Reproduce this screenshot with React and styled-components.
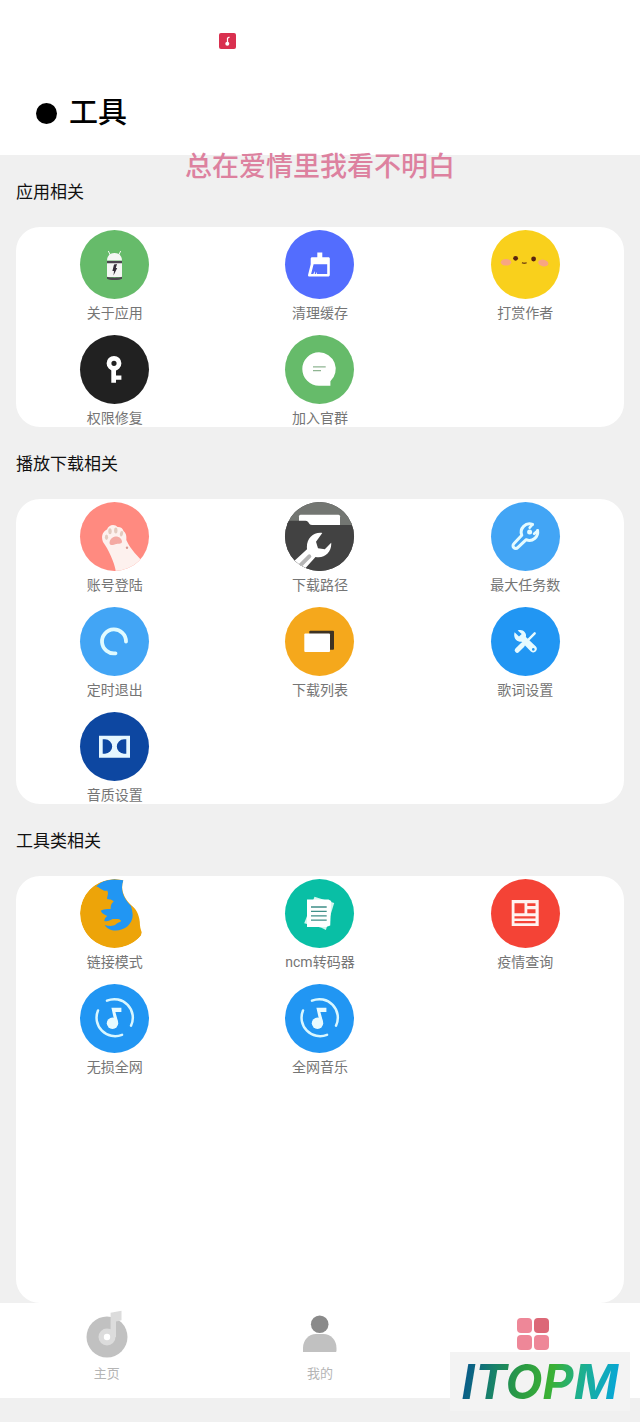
import React from 'react';
import styled, { createGlobalStyle } from 'styled-components'

const GlobalStyle = createGlobalStyle`
* {
    box-sizing: border-box;
}
body {
    margin: 0;
    background: #f0f0f0;
    font-family: Roboto, "Noto Sans CJK SC", sans-serif;
}
button {
    border: 0;
    padding: 0;
    background: none;
    font: inherit;
    cursor: pointer;
}
`

const Page = styled.div`
    position: relative;
    display: flex;
    flex-direction: column;
    min-height: 100vh;
    padding-bottom: 24px;
`

const Header = styled.header`
    background: white;
    padding-bottom: 11px;
`

const StatusBar = styled.div`
    display: flex;
    align-items: center;
    height: 82px;
    padding-left: 34%;
`

const TitleRow = styled.div`
    display: flex;
    align-items: center;
    gap: 12px;
    height: 62px;
    padding-left: 36px;
`

const Dot = styled.span`
    width: 21px;
    height: 21px;
    border-radius: 50%;
    background: black;
`

const Title = styled.h1`
    margin: 0;
    font-size: 29px;
    font-weight: 500;
    line-height: 40px;
    color: black;
`

/* floating desktop lyric, sits over the header edge */
const Lyric = styled.p`
    position: absolute;
    top: 147px;
    left: 0;
    right: 0;
    margin: 0;
    text-align: center;
    font-size: 27px;
    font-weight: 500;
    line-height: 40px;
    color: #dd819f;
    pointer-events: none;
`

const Main = styled.main`
    flex: 1;
    display: flex;
    flex-direction: column;
    padding: 0 16px;
`

const Section = styled.section`
    display: flex;
    flex-direction: column;
    flex-grow: ${(props) => (props.$fill ? 1 : 0)};
`

const SectionTitle = styled.h2`
    margin: 0;
    padding-top: 2px;
    font-size: 17px;
    font-weight: 400;
    line-height: 70px;
    color: #111;
`

const Card = styled.ul`
    flex-grow: 1;
    display: grid;
    grid-template-columns: repeat(3, 1fr);
    align-content: start;
    gap: 13px 8px;
    margin: 0;
    padding: 3px 0 0;
    list-style: none;
    background: white;
    border-radius: 24px;
`

const Tool = styled.li`
    display: flex;
    justify-content: center;
`

const ToolButton = styled.button`
    display: flex;
    flex-direction: column;
    align-items: center;
    gap: 6px;
    font-size: 14px;
    line-height: 17px;
    color: #757575;
`

const Round = styled.span`
    display: block;
    width: 69px;
    height: 69px;
    border-radius: 50%;
    overflow: hidden;
    background: ${(props) => props.$color};
    svg {
        display: block;
    }
`

const TabBar = styled.nav`
    display: grid;
    grid-template-columns: repeat(3, 1fr);
    height: 95px;
    background: white;
`

const Tab = styled.button`
    display: flex;
    flex-direction: column;
    align-items: center;
    gap: 6px;
    padding-top: 7px;
    font-size: 13px;
    line-height: 20px;
    color: #b5b5b5;
`

const Watermark = styled.div`
    position: absolute;
    right: 10px;
    bottom: 11px;
    width: 180px;
    height: 59px;
    display: flex;
    align-items: center;
    justify-content: center;
    background: #f3f3f3;
`

const WatermarkText = styled.span`
    padding: 0 4px;
    font-family: Inter, sans-serif;
    font-size: 48px;
    font-weight: 700;
    font-style: italic;
    line-height: 59px;
    color: transparent;
    background: linear-gradient(100deg, #06568f 4%, #17806a 22%, #2a9a45 38%, #3bb034 56%, #1fb08a 72%, #06a6dc 96%);
    background-clip: text;
`

function Glyph({ children }) {
    return <svg width="69" height="69" viewBox="0 0 69 69" aria-hidden="true">{children}</svg>
}

const Android = () => (
    <Glyph>
        <path d="M28.3 21l2 4M40.7 21l-2 4" stroke="#f4f6f4" strokeWidth="1" />
        <path d="M27 30.500c0-4 2.500-7.500 7.500-7.500s7.500 3.500 7.500 7.500z" fill="#f4f6f4" />
        <path d="M27 33h15v14H27z" fill="#f4f6f4" />
        <path d="M27 31h15v2.200H27zM27 46.800c4 1.200 11 1.200 15 0v2c-2 1.700-13 1.700-15 0z" fill="#4d4650" />
        <path d="M34 34.500l3-.5-1.200 4h1.400l-3.700 7.500.5-4.500h-1.600z" fill="#332d38" />
    </Glyph>
)

const Broom = () => (
    <Glyph>
        <path d="M32.300 22.500h5v4.700h6c1 0 1.500.5 1.500 1.500v16c0 1.200-.6 1.800-1.800 1.800H24.500c-1.200 0-1.700-.7-1.400-1.800l2.600-10.500V28.700c0-1 .5-1.500 1.500-1.500h5.100z" fill="white" />
        <path d="M28.600 34.300h13.600v9.600H32v-2.200l-1 2.200h-1.200v-3l-1.500 3h-2.200z" fill="#536dfe" />
    </Glyph>
)

const Face = () => (
    <Glyph>
        <ellipse cx="15" cy="32.300" rx="5.200" ry="3.300" fill="#f8a582" />
        <ellipse cx="52.300" cy="33" rx="5.200" ry="3.300" fill="#f8a582" transform="rotate(12 52.300 33)" />
        <circle cx="24.600" cy="28.300" r="2.400" fill="#5a2410" />
        <circle cx="42.600" cy="29" r="2.400" fill="#5a2410" />
        <path d="M31 32.600q2.300 1.200 4.600 0" stroke="#7a4a10" strokeWidth="1.400" fill="none" />
    </Glyph>
)

const Key = () => (
    <Glyph>
        <circle cx="34" cy="28.300" r="5" fill="none" stroke="white" strokeWidth="4.800" />
        <path d="M31.300 34h4.700v6.600h5.400v4.200H36v2.900h-4.700z" fill="white" />
    </Glyph>
)

const Chat = () => (
    <Glyph>
        <path d="M34 17.300a16.700 16.700 0 1 0 0 33.400h11.400v-4.500A16.700 16.700 0 0 0 34 17.300z" fill="white" />
        <path d="M28 31.900h12.700M28 35.700h8" stroke="#8fb592" strokeWidth="1.300" />
    </Glyph>
)

const Paw = () => (
    <Glyph>
        <path d="M23 40c-2.500-6 .5-11 4-12.500 1-3 3.500-4.500 6-4.500 2 0 3.500.8 4.500 2 3-.2 5.500 1.500 6 4 3 2 3 6 2.800 9 3 7 8.500 13.500 16 21L56 72H36c0-8-7-24-13-32z" fill="#fdf1ee" />
        <path d="M29.500 41c0-3 2.500-6 6-6.500 3.500-.2 6.200 2 6.500 5 0 2.500-3 2-5.500 2.500-3 .6-6.500 2.500-7-1z" fill="#f4aaa3" />
        <ellipse cx="26.500" cy="35.300" rx="1.600" ry="2.700" fill="#e3cbbf" />
        <ellipse cx="30" cy="29.300" rx="1.700" ry="3" fill="#e3cbbf" />
        <ellipse cx="35.800" cy="28.500" rx="1.700" ry="3" fill="#e3cbbf" />
        <ellipse cx="41.500" cy="31.700" rx="1.600" ry="2.800" fill="#e3cbbf" transform="rotate(15 41.500 31.700)" />
        <circle cx="47" cy="45.700" r="1.200" fill="#d99c93" />
    </Glyph>
)

const FolderWrench = () => (
    <Glyph>
        <path d="M0 0h69v23.300H0z" fill="#737672" />
        <rect x="14" y="12.700" width="41" height="12" rx="1.500" fill="white" />
        <path d="M0 18.700h20.500c3.500 0 3 4.300 6.500 4.300h42v46H0z" fill="#424242" />
        <path d="M37.300 31c-9-1.300-16.500 6-15.300 16.200L7 61l9 10 14.500-16c9 2 16.500-5 15.700-14.300l-6.400 6.600-6.800-1-2-6.600z" fill="white" />
        <path d="M15.300 63.300l9-9" stroke="#b5b5b5" strokeWidth="4" strokeLinecap="round" />
    </Glyph>
)

const Wrench = () => (
    <Glyph>
        <path d="M41.500 22.500a8.300 8.300 0 0 0-10.700 10.800L22.800 41.700a2.700 2.700 0 0 0 3.900 3.900l8.500-7.900A8.300 8.300 0 0 0 46.600 28.600" fill="none" stroke="#e4fbff" strokeWidth="3" strokeLinecap="round" strokeLinejoin="round" />
        <path d="M41.500 22.500l-2.800 3.200M46.600 28.600l-3.400 3.200" stroke="#e4fbff" strokeWidth="2.600" strokeLinecap="round" />
        <circle cx="38.600" cy="30" r="2.500" fill="#e4fbff" />
    </Glyph>
)

const Timer = () => (
    <Glyph>
        <path d="M46 34.500A12 12 0 1 0 35.500 46.300" fill="none" stroke="#e0fbff" strokeWidth="3.800" strokeLinecap="round" />
    </Glyph>
)

const Copies = () => (
    <Glyph>
        <rect x="24.300" y="23.700" width="24.700" height="19" rx="1" fill="#3e3323" />
        <rect x="19.300" y="26.500" width="25.700" height="18.500" rx="1" fill="white" />
    </Glyph>
)

const Tools = () => (
    <Glyph>
        <path d="M43.700 26.300l-7 7" stroke="#e6faff" strokeWidth="2.400" strokeLinecap="round" />
        <path d="M31.500 38l-5.300 5.300" stroke="#e6faff" strokeWidth="5" strokeLinecap="round" />
        <path d="M23.600 25.300l4.400 4.200 2.700-2.500-4-3.600c5-1.800 9.300 2.200 8.200 6.500l10 9.700c3 3.200-1.700 8-5 4.800l-9.700-10c-4.500 1.400-8.300-3.800-6.600-9.100z" fill="#e6faff" />
        <circle cx="42.300" cy="42.400" r="1.300" fill="#2196f3" />
    </Glyph>
)

const Dolby = () => (
    <Glyph>
        <path d="M19 23.700h31v22H19z" fill="#e6f7ff" />
        <path d="M22.700 27.300h2.300a7.200 7.200 0 0 1 7.200 7.200 7.200 7.200 0 0 1-7.200 7.200h-2.300zM46.300 27.300h-2.300a7.200 7.200 0 0 0-7.200 7.200 7.200 7.200 0 0 0 7.200 7.200h2.300z" fill="#0d47a1" />
    </Glyph>
)

const Firefox = () => (
    <Glyph>
        <path d="M43.300 1.200A34.500 34.500 0 1 0 60.800 57l.9-3.700C60.500 50 59.800 47 59.800 43c-.8-8-4-13.500-8.800-17C44 19 40 10 43.300 1.200z" fill="#eda409" />
        <path d="M16.700 7C21 2 31 -1 43.400 1.200 40 10 43 19 51 27q1.500 4 1.700 9c0 9-8 15.500-17 15.500-5 0-9-2-11-5.500 4 1 8 1.500 11-.5 2-2 4-2 5.500-3.500-1-2.500-5-2-8.500-2-3 1.500-5 3-8.500 2 .5-2 1-3.500 3-5-2.500-1.500-5-2-6.500-5.300 3-1.700 6-1.700 10-1.700 0-3 0-5 3-7.500-2-2.500-4.500-1.500-6.500-2.500-.5-3 2-5 0-8.500-4 1.500-7-3-11.800-4.500z" fill="#2196f3" />
    </Glyph>
)

const Papers = () => (
    <Glyph>
        <path d="M29.500 17.700l19.700 6.300-8.300 27-4.500-2.300-17.200-4.500z" fill="#d2f7ef" />
        <path d="M22 20.500h21.500l2.700 1.500-1 24.500-4 1.500H22z" fill="white" />
        <path d="M26 28h15.700M26 32.400h15.700M26 36.800h15.700M26 41.200h15.700" stroke="#3f8f88" strokeWidth="1.300" />
    </Glyph>
)

const News = () => (
    <Glyph>
        <path fillRule="evenodd" d="M20.700 21h27v26h-27zM23.500 24.300v10h10v-10zM36.300 24.300v2.700h8.200v-2.700zM36.300 30.300v4h8.200v-4zM23.500 37.300v2.200h21v-2.200zM23.500 42v2.300h21V42z" fill="#fff3f0" />
    </Glyph>
)

const Note = () => (
    <Glyph>
        <path d="M27 16.700A18.500 18.500 0 0 1 51 41.700M42 50.800A18.500 18.500 0 0 1 18 26.500" fill="none" stroke="#d9f7ff" strokeWidth="2.500" strokeLinecap="round" />
        <path d="M31.400 23.700h10v4.200h-6l2.800 10.500-3 2.500z" fill="#e8fbff" />
        <circle cx="32.500" cy="39.300" r="5.700" fill="#e8fbff" />
    </Glyph>
)

const sections = [
    {
        title: '应用相关',
        tools: [
            { name: '关于应用', color: '#66bb6a', icon: Android },
            { name: '清理缓存', color: '#536dfe', icon: Broom },
            { name: '打赏作者', color: '#f9d01c', icon: Face },
            { name: '权限修复', color: '#212121', icon: Key },
            { name: '加入官群', color: '#66bb6a', icon: Chat },
        ],
    },
    {
        title: '播放下载相关',
        tools: [
            { name: '账号登陆', color: '#ff8a80', icon: Paw },
            { name: '下载路径', color: '#424242', icon: FolderWrench },
            { name: '最大任务数', color: '#42a5f5', icon: Wrench },
            { name: '定时退出', color: '#42a5f5', icon: Timer },
            { name: '下载列表', color: '#f5a81c', icon: Copies },
            { name: '歌词设置', color: '#2196f3', icon: Tools },
            { name: '音质设置', color: '#0d47a1', icon: Dolby },
        ],
    },
    {
        title: '工具类相关',
        tools: [
            { name: '链接模式', color: 'white', icon: Firefox },
            { name: 'ncm转码器', color: '#09bfa5', icon: Papers },
            { name: '疫情查询', color: '#f44336', icon: News },
            { name: '无损全网', color: '#2196f3', icon: Note },
            { name: '全网音乐', color: '#2196f3', icon: Note },
        ],
    },
]

export default function App() {

    return (
        <Page>
            <GlobalStyle />
            <Header>
                <StatusBar>
                    <svg width="18" height="18" viewBox="0 0 18 18" aria-hidden="true">
                        <rect x="1" y="1" width="17" height="16" rx="2" fill="#d9304f" />
                        <path d="M11.500 5l-2 1.200v5" stroke="white" strokeWidth="1.200" fill="none" />
                        <circle cx="9.300" cy="11.800" r="2" fill="white" />
                    </svg>
                </StatusBar>
                <TitleRow>
                    <Dot />
                    <Title>工具</Title>
                </TitleRow>
            </Header>
            <Lyric>总在爱情里我看不明白</Lyric>

            <Main>
                {sections.map((section, i) => (
                    <Section key={section.title} $fill={i === sections.length - 1}>
                        <SectionTitle>{section.title}</SectionTitle>
                        <Card>
                            {section.tools.map(({ name, color, icon: Icon }) => (
                                <Tool key={name}>
                                    <ToolButton type="button">
                                        <Round $color={color}><Icon /></Round>
                                        {name}
                                    </ToolButton>
                                </Tool>
                            ))}
                        </Card>
                    </Section>
                ))}
            </Main>

            <TabBar>
                <Tab type="button">
                    <svg width="48" height="48" viewBox="0 0 48 48" aria-hidden="true">
                        <circle cx="24" cy="27" r="20.500" fill="#c1c1c1" />
                        <circle cx="24" cy="27" r="8.500" fill="#dcdcdc" />
                        <path d="M27.600 2.700L38.500.7v9.600L33 11.500V27h-5.400z" fill="#dcdcdc" />
                        <circle cx="24" cy="27" r="3.200" fill="white" />
                    </svg>
                    主页
                </Tab>
                <Tab type="button">
                    <svg width="48" height="48" viewBox="0 0 48 48" aria-hidden="true">
                        <circle cx="23.700" cy="14.300" r="8.800" fill="#8a8a8a" />
                        <path d="M7 42v-4c0-8 6-14 13-14h7.500c7 0 13 6 13 14v2.500c0 1-.5 1.500-1.500 1.500z" fill="#c1c1c1" />
                    </svg>
                    我的
                </Tab>
                <Tab type="button" aria-label="工具">
                    <svg width="48" height="48" viewBox="0 0 48 48" aria-hidden="true">
                        <rect x="8" y="8" width="15" height="15" rx="4" fill="#ee8798" />
                        <rect x="25" y="8" width="15" height="15" rx="4" fill="#dc6877" />
                        <rect x="8" y="25" width="15" height="15" rx="4" fill="#ee8798" />
                        <rect x="25" y="25" width="15" height="15" rx="4" fill="#ee8798" />
                    </svg>
                </Tab>
            </TabBar>

            <Watermark><WatermarkText>ITOPM</WatermarkText></Watermark>
        </Page>
    )
}
